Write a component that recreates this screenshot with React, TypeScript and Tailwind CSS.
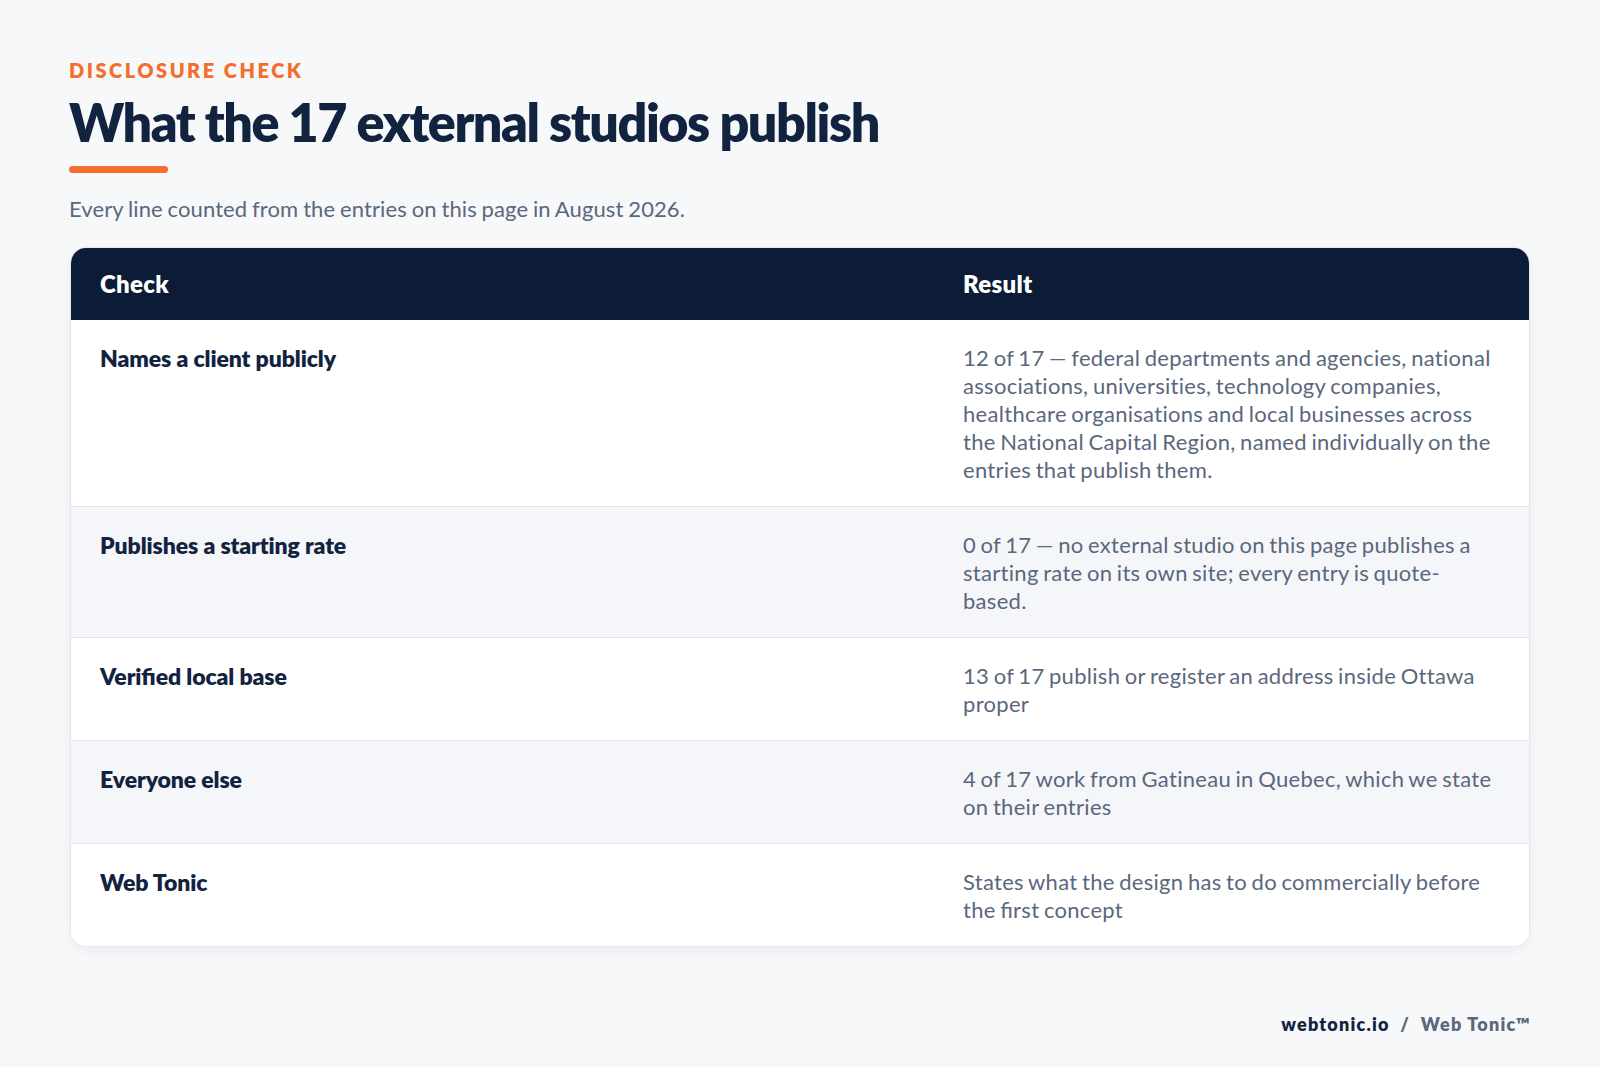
export default function App() {
  const rows = [
    { label: "Names a client publicly", text: "12 of 17 — federal departments and agencies, national associations, universities, technology companies, healthcare organisations and local businesses across the National Capital Region, named individually on the entries that publish them.", labelLiga: "", textLiga: "" },
    { label: "Publishes a starting rate", text: "0 of 17 — no external studio on this page publishes a starting rate on its own site; every entry is quote-based.", labelLiga: "", textLiga: "" },
    { label: "Verified local base", text: "13 of 17 publish or register an address inside Ottawa proper", labelLiga: "[font-feature-settings:'liga']", textLiga: "" },
    { label: "Everyone else", text: "4 of 17 work from Gatineau in Quebec, which we state on their entries", labelLiga: "", textLiga: "" },
    { label: "Web Tonic", text: "States what the design has to do commercially before the first concept", labelLiga: "", textLiga: "[font-feature-settings:'liga']" },
  ];
  return (
    <div className="w-[1600px] h-[1067px] bg-[#f7f8fa] px-[69px] pt-[57px] font-['Lato',sans-serif] flex flex-col overflow-hidden">
      <div className="text-[20px] leading-[26px] font-extrabold tracking-[2.5px] text-[#f36f2e]">DISCLOSURE CHECK</div>
      <h1 className="text-[52px] leading-[62px] font-extrabold tracking-[-1.45px] text-[#12233f] mt-[8px]">What the 17 external studios publish</h1>
      <div className="w-[99px] h-[7px] rounded-full bg-[#f36f2e] mt-[13px]"></div>
      <p className="text-[22px] leading-[30px] text-[#5a677d] mt-[21px] tracking-[0.1px] [word-spacing:-0.9px]">Every line counted from the entries on this page in August 2026.</p>
      <div className="mt-[23px] mx-[1px] rounded-[16px] overflow-hidden bg-white border border-[#e3e7ec] shadow-[0_4px_14px_rgba(15,30,60,0.05)]">
        <div className="grid grid-cols-[863px_1fr] bg-[#0c1c36] text-white text-[24px] font-extrabold tracking-[0.3px] h-[72px] items-center px-[29px]">
          <div>Check</div>
          <div>Result</div>
        </div>
        {rows.map((r, i) => (
          <div key={i} className={`grid grid-cols-[863px_1fr] px-[29px] pt-[24px] pb-[22px] ${i % 2 ? "bg-[#f4f6fa]" : "bg-white"} ${i < rows.length - 1 ? "border-b border-[#e3e7ec]" : ""}`}>
            <div className={`text-[23px] leading-[28px] font-extrabold text-[#12233f] tracking-[-0.1px] ${r.labelLiga}`}>{r.label}</div>
            <div className={`text-[22px] leading-[28px] text-[#5a677d] tracking-[0.3px] [word-spacing:-1.4px] ${r.textLiga}`}>{r.text}</div>
          </div>
        ))}
      </div>
      <div className="mt-[64px] self-end text-[18px] leading-[26px] font-extrabold tracking-[1.2px]">
        <span className="text-[#12233f]">webtonic.io</span>
        <span className="text-[#5a677d]"> &nbsp;/&nbsp; Web Tonic™</span>
      </div>
    </div>
  );
}
